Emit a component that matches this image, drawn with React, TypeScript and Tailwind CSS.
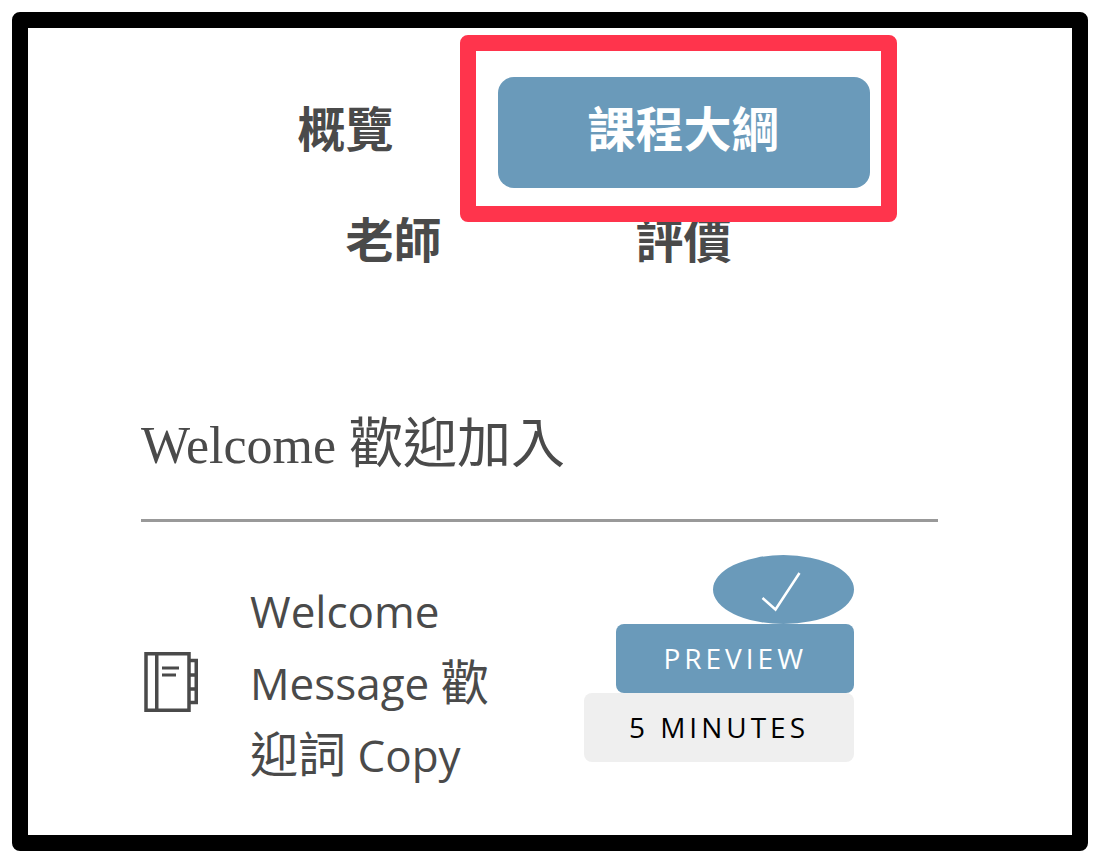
import clsx from "clsx";

type Tab = {
  id: string;
  label: string;
};

const TABS: Tab[] = [
  { id: "overview", label: "概覽" },
  { id: "outline", label: "課程大綱" },
  { id: "teacher", label: "老師" },
  { id: "reviews", label: "評價" },
];

const ACTIVE_TAB = "outline";

function NotebookIcon() {
  return (
    <svg viewBox="0 0 54 62" className="h-[62px] w-[54px] shrink-0" fill="none" stroke="currentColor" strokeWidth="3.5" aria-hidden="true">
      <path d="M2 1.750H45v56.500H2z" />
      <path d="M12.750 1.500v57" />
      <path d="M46 8.500h6.250v42H46M46 23h6M46 37h6" />
      <path d="M18 16h17M18 23h14" strokeWidth="3" />
    </svg>
  );
}

function CheckIcon() {
  return (
    <svg viewBox="0 0 46 40" className="h-[40px] w-[46px]" fill="none" stroke="currentColor" strokeWidth="2.5" aria-hidden="true">
      <path d="M1.500 26 14.500 37.500 38.500 1" />
    </svg>
  );
}

function TabBar() {
  return (
    <nav className="flex flex-wrap justify-center gap-x-[14px] pr-0.5">
      {TABS.map(({ id, label }) => {
        const active = id === ACTIVE_TAB;
        return (
          <div key={id} className={clsx("relative", active && "z-10")}>
            <button
              type="button"
              className={clsx(
                "h-[111px] rounded-2xl px-[90px] pb-2 text-5xl font-bold",
                active ? "bg-[#6a9aba] text-white" : "text-[#4a4a4a]",
              )}
            >
              {label}
            </button>
            {active && (
              <span className="pointer-events-none absolute -top-[42px] -right-[27px] -bottom-[34px] -left-[38px] rounded-lg border-16 border-[#ff344c]" />
            )}
          </div>
        );
      })}
    </nav>
  );
}

function LessonRow() {
  return (
    <div className="flex items-start justify-between pt-[33px] pr-[84px] pl-[3px]">
      <div className="flex items-center gap-[52px] pt-5">
        <NotebookIcon />
        <h3 className="w-[260px] text-[44px] leading-[72px]">
          Welcome Message <span className="text-5xl leading-none">歡迎詞</span> Copy
        </h3>
      </div>
      <div className="flex flex-col items-end text-[28px] leading-[69px] tracking-[4px]">
        <span className="flex h-[69px] w-[141px] items-center justify-center rounded-[50%] bg-[#6a9aba] pt-1 text-white">
          <CheckIcon />
        </span>
        <button type="button" className="rounded-lg bg-[#6a9aba] px-[47px] text-white">
          PREVIEW
        </button>
        <span className="rounded-lg bg-[#efefef] px-[45px] text-black">5 MINUTES</span>
      </div>
    </div>
  );
}

export default function App() {
  return (
    <div className="bg-white pt-3 pr-[14px] pb-[14px] pl-3">
      <main
        lang="zh-Hant"
        className="rounded-lg border-16 border-black pt-[49px] pr-[134px] pb-11 pl-[113px] font-['Open_Sans','Noto_Sans_CJK_TC',sans-serif] text-[#4a4a4a]"
      >
        <TabBar />
        <section className="mt-[110px]">
          <h2 className="border-b-3 border-[#999999] pb-[38px] text-[54px] leading-[72px] font-['Liberation_Serif','Noto_Sans_CJK_TC',serif]">
            <span className="text-[52px] leading-none">Welcome </span>歡迎加入
          </h2>
          <LessonRow />
        </section>
      </main>
    </div>
  );
}
